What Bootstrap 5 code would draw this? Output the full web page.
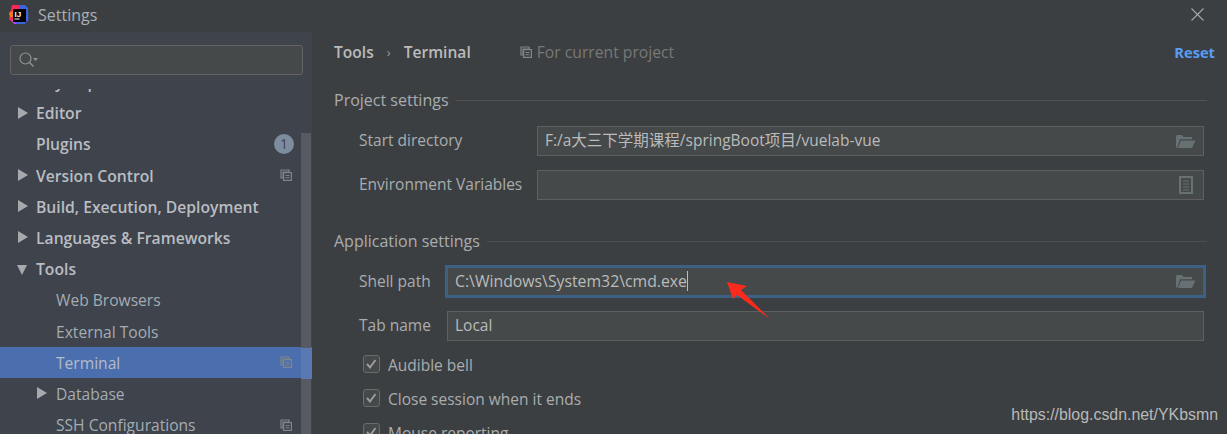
<!doctype html>
<html lang="en">
<head>
<meta charset="utf-8">
<title>Settings</title>
<link href="https://cdn.jsdelivr.net/npm/bootstrap@5.3.0/dist/css/bootstrap.min.css" rel="stylesheet">
<style>
html,body{height:100%;overflow:hidden}
body{background:#3c3f41;color:#bbbbbb;font:15.6px/20px "Open Sans","Noto Sans CJK SC",sans-serif;position:relative}
.ttl{height:32px;padding:0 0 3px 9px;gap:9px;background:#3c3f41}
.ttl-t{color:#a9b0b5;font-size:16px}
.x-btn{margin-left:auto;margin-right:23px;display:block}
.shell{height:402px}
.side{width:312px;background:#3e434c;flex:none;position:relative;overflow:hidden}
.srch{margin:13px 9px 0 10px;height:30px;background:#45494a;border:1px solid #646464;border-radius:3px;padding-left:7px}
.tree{margin-top:14px;height:345px;overflow:hidden}
.tree-in{margin-top:-22.5px}
.tr{height:31.2px;padding-left:36px;position:relative;white-space:nowrap;color:#b4b9bf}
.tr.b{font-weight:600;font-size:15.7px;color:#b9bdc2}
.tr.s{padding-left:56px;color:#a5acb3}
.tr.sel{background:#4b6eaf;color:#b4bcc6}
.tri{position:absolute;top:9px;left:18px;width:0;height:0;border-left:10px solid #a7aaad;border-top:6px solid transparent;border-bottom:6px solid transparent}
.tri.d{left:17px;top:11px;border-top:10px solid #a7aaad;border-left:5.5px solid transparent;border-right:5.5px solid transparent;border-bottom:0}
.tri.in{left:37px}
.mini{position:absolute;right:20px;top:9px}
.pill{position:absolute;right:18px;top:5px;width:20px;height:20px;border-radius:50%;background:#7d8d9f;color:#3e434c;font-size:14px;font-weight:400;line-height:20px;text-align:center}
.sbar{position:absolute;left:301px;top:101px;bottom:0;width:10px;background:#575a62}
.sbar-band{position:absolute;left:301px;top:316px;height:31px;width:11px;background:#5a79b3}
.pane{padding:0 23px 0 22px;min-width:0}
.crumb{height:40px;font-weight:600;color:#bbbbbb}
.crumb .sep{margin:0 13px;font-weight:400;color:#9a9a9a;font-size:13px}
.scope{margin-left:49px;color:#787878;font-weight:400;gap:5px;font-size:15.7px}
.rst{margin-left:auto;color:#589df6;font-weight:700;font-size:14.7px;margin-right:-11px}
.sect{margin-top:16px;height:24px;gap:7px;color:#a9adb0;font-size:16px}
.sect i{flex:1;height:1px;background:#515151;margin-right:-3px}
.sect.thin{margin-top:29px}
.sect.thin i{background:#4c4e50}
.frow{margin-left:25px;height:30px}
.frow.first{margin-top:14px}
.frow.next{margin-top:14px}
.frow.shellr{margin-top:12px;height:33px}
.frow.tabr{margin-top:13px}
.lab{flex:none;color:#a9adb0;font-size:15.5px;padding-bottom:2px}
.lab.w1{width:178px}
.lab.w2{width:88px}
.form-control.fld{background:#45494a;border:1px solid #5e6060;border-radius:0;color:#bbbbbb;font-size:15.5px;line-height:20px;padding:0 7px 2px;height:30px;box-shadow:none}
.form-control.fld.foc{border:3px solid #3d6185;height:33px;width:auto;margin:0 -2px 0 -2px;font-size:15.8px}
.caret-l{display:inline-block;width:1px;height:20px;background:#bbbbbb;vertical-align:-4px}
.fic{margin-left:auto;flex:none;margin-top:2px}
.fic.doc{margin-right:3px}
.chk{margin-left:29px;height:18px;gap:8px;color:#a9adb0;font-size:15.5px}
.chk label{margin-top:2px}
.chk.c1{margin-top:14px}
.chk.c2{margin-top:16px}
.form-check-input.cb{margin:0;width:17px;height:18px;flex:none;background-color:#45494a;border:1px solid #6b6b6b;border-radius:3px;background-image:url("data:image/svg+xml,%3Csvg xmlns='http://www.w3.org/2000/svg' viewBox='0 0 17 18'%3E%3Cpath d='M4 9l3 3.5 5.500-7.500' fill='none' stroke='%239c9c9c' stroke-width='2'/%3E%3C/svg%3E");background-size:17px 18px}
.arrow{position:absolute;left:720px;top:275px}
.wm{position:absolute;right:9px;top:405px;color:#b9b9b9;font:15.9px/20px "Liberation Sans",sans-serif}
</style>
</head>
<body>
<svg width="0" height="0" class="d-block"><defs>
<g id="cp"><path d="M1 1h8v2H3v6H1z" fill="none" stroke="#7f8589" stroke-width="1.2"/><rect x="3.600" y="3.600" width="7.800" height="7.800" fill="none" stroke="#7f8589" stroke-width="1.2"/><path d="M5.500 6.500h4M5.500 8.700h4" stroke="#7f8589"/></g>
<g id="fo"><path d="M0 2.500C0 1.500 .8 1 1.500 1H6l1.500 2H16v2.200H4L1.500 13.500H0z" fill="#677073"/><path d="M5 6.500h14.500L16 14H2z" fill="#677073"/></g>
</defs></svg>

<div class="ttl d-flex align-items-center">
  <svg width="20" height="20" viewBox="0 0 20 20">
    <path d="M3 0h7l3 4-9 14-4-4 1-4-1-2 2-3z" fill="#fe2857"/>
    <path d="M11 0h5l3 3 .5 12-4 4H6z" fill="#3d63e0"/>
    <path d="M0 8l4-2v6H1z" fill="#f97a12"/>
    <path d="M2 14l6 5H5z" fill="#b74af7"/>
    <rect x="4" y="4" width="13" height="13" fill="#000"/>
    <text x="5.500" y="11.500" fill="#fff" font-family="Liberation Sans" font-size="8" font-weight="700">IJ</text>
    <rect x="5.500" y="13.500" width="5" height="1" fill="#fff"/>
  </svg>
  <span class="ttl-t">Settings</span>
  <svg class="x-btn" width="13" height="13" viewBox="0 0 13 13"><path d="M.5.500l12 12M12.500.500l-12 12" stroke="#a5a7a8" stroke-width="1.100"/></svg>
</div>

<div class="shell d-flex">
  <aside class="side">
    <div class="srch d-flex align-items-center">
      <svg width="24" height="20" viewBox="0 0 24 20"><circle cx="7.500" cy="8.500" r="5.500" fill="none" stroke="#8e9497" stroke-width="1.200"/><path d="M11.500 12.500l4 4" stroke="#8e9497" stroke-width="1.500"/><path d="M15 8h5l-2.500 3z" fill="#8e9497"/></svg>
    </div>
    <div class="tree"><div class="tree-in">
      <div class="tr b d-flex align-items-center">Keymap</div>
      <div class="tr b d-flex align-items-center"><span class="tri"></span>Editor</div>
      <div class="tr b d-flex align-items-center">Plugins<span class="pill">1</span></div>
      <div class="tr b d-flex align-items-center"><span class="tri"></span>Version Control<svg class="mini" width="12" height="12"><use href="#cp"/></svg></div>
      <div class="tr b d-flex align-items-center"><span class="tri"></span>Build, Execution, Deployment</div>
      <div class="tr b d-flex align-items-center"><span class="tri"></span>Languages &amp; Frameworks</div>
      <div class="tr b d-flex align-items-center"><span class="tri d"></span>Tools</div>
      <div class="tr s d-flex align-items-center">Web Browsers</div>
      <div class="tr s d-flex align-items-center">External Tools</div>
      <div class="tr s sel d-flex align-items-center">Terminal<svg class="mini" width="12" height="12"><use href="#cp"/></svg></div>
      <div class="tr s d-flex align-items-center"><span class="tri in"></span>Database</div>
      <div class="tr s d-flex align-items-center">SSH Configurations<svg class="mini" width="12" height="12"><use href="#cp"/></svg></div>
    </div></div>
    <div class="sbar"></div>
    <div class="sbar-band"></div>
  </aside>

  <main class="pane flex-grow-1">
    <div class="crumb d-flex align-items-center">
      <span>Tools</span><span class="sep">›</span><span>Terminal</span>
      <span class="scope d-inline-flex align-items-center"><svg width="12" height="12"><use href="#cp"/></svg>For current project</span>
      <span class="rst">Reset</span>
    </div>
    <div class="sect d-flex align-items-center"><span>Project settings</span><i></i></div>
    <div class="frow first d-flex align-items-center">
      <span class="lab w1">Start directory</span>
      <div class="form-control fld d-flex align-items-center">F:/a大三下学期课程/springBoot项目/vuelab-vue<svg class="fic" width="20" height="15"><use href="#fo"/></svg></div>
    </div>
    <div class="frow next d-flex align-items-center">
      <span class="lab w1">Environment Variables</span>
      <div class="form-control fld d-flex align-items-center"><svg class="fic doc" width="14" height="18" viewBox="0 0 14 18"><rect x="1" y="1" width="12" height="16" fill="none" stroke="#677073" stroke-width="2"/><path d="M4 5h6M4 8h6M4 11h6M4 14h6" stroke="#677073"/></svg></div>
    </div>
    <div class="sect thin d-flex align-items-center"><span>Application settings</span><i></i></div>
    <div class="frow shellr d-flex align-items-center">
      <span class="lab w2">Shell path</span>
      <div class="form-control fld foc flex-grow-1 d-flex align-items-center"><span>C:\Windows\System32\cmd.exe<span class="caret-l"></span></span><svg class="fic" width="20" height="15"><use href="#fo"/></svg></div>
    </div>
    <div class="frow tabr d-flex align-items-center">
      <span class="lab w2">Tab name</span>
      <div class="form-control fld d-flex align-items-center">Local</div>
    </div>
    <div class="chk c1 d-flex align-items-center"><input class="form-check-input cb" type="checkbox" checked id="c1"><label for="c1">Audible bell</label></div>
    <div class="chk c2 d-flex align-items-center"><input class="form-check-input cb" type="checkbox" checked id="c2"><label for="c2">Close session when it ends</label></div>
    <div class="chk c2 d-flex align-items-center"><input class="form-check-input cb" type="checkbox" checked id="c3"><label for="c3">Mouse reporting</label></div>
  </main>
</div>

<svg class="arrow" width="56" height="50" viewBox="720 275 56 50"><path d="M727 282l20 4-6 4 29 29-33-24-4 4z" fill="#fb2a1c"/></svg>
<div class="wm">https://blog.csdn.net/YKbsmn</div>
</body>
</html>
